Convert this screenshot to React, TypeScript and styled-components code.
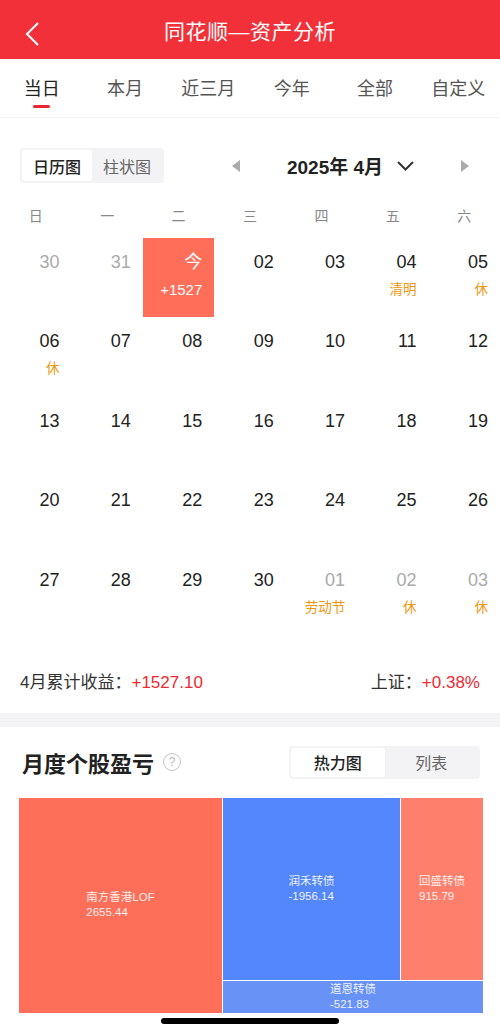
import React from "react";
import styled, { createGlobalStyle } from "styled-components";

const GlobalStyle = createGlobalStyle`
	* {
		box-sizing: border-box;
	}
	html,
	body {
		margin: 0;
		padding: 0;
		width: 500px;
		height: 1034px;
		overflow: hidden;
		background: #fff;
		font-family: "Liberation Sans", "Noto Sans CJK SC", sans-serif;
		color: #222;
	}
`;

const Page = styled.div`
	width: 500px;
	height: 1034px;
	display: flex;
	flex-direction: column;
`;

const Header = styled.header`
	height: 59px;
	background: #f1303a;
	display: flex;
	align-items: center;
	justify-content: center;
	position: relative;
	color: #fff;
	font-size: 21px;
	letter-spacing: 0.5px;
`;

const BackButton = styled.div`
	position: absolute;
	left: 24px;
	top: 21px;
	width: 18px;
	height: 26px;
	display: flex;
`;

const Tabs = styled.nav`
	height: 59px;
	display: grid;
	grid-template-columns: repeat(6, 1fr);
	border-bottom: 1px solid #f2f2f2;
`;

interface ActiveProps {
	active?: boolean;
}

const Tab = styled.div<ActiveProps>`
	position: relative;
	display: flex;
	align-items: center;
	justify-content: center;
	font-size: 18px;
	color: ${(p) => (p.active ? "#222" : "#555")};
	padding-bottom: 2px;

	&::after {
		content: "";
		display: ${(p) => (p.active ? "block" : "none")};
		position: absolute;
		left: 50%;
		bottom: 9px;
		width: 17px;
		height: 3px;
		margin-left: -9px;
		border-radius: 2px;
		background: #e8262f;
	}
`;

const Toolbar = styled.div`
	display: flex;
	align-items: center;
	padding: 0 30px 0 20px;
	margin-top: 30px;
	height: 35px;
`;

const Segmented = styled.div<{ width: number }>`
	width: ${(p) => p.width}px;
	height: 100%;
	display: grid;
	grid-template-columns: 1fr 1fr;
	background: #f3f3f5;
	border-radius: 4px;
	padding: 2px;
`;

const Segment = styled.div<ActiveProps>`
	display: flex;
	align-items: center;
	justify-content: center;
	font-size: 16px;
	border-radius: 3px;
	background: ${(p) => (p.active ? "#fff" : "transparent")};
	color: ${(p) => (p.active ? "#222" : "#666")};
	font-weight: ${(p) => (p.active ? 500 : 400)};
`;

const MonthNav = styled.div`
	flex: 1;
	margin-left: 67px;
	display: flex;
	align-items: center;
	justify-content: space-between;
`;

const MonthTitle = styled.div`
	display: flex;
	align-items: center;
	gap: 14px;
	font-size: 19px;
	font-weight: bold;
	color: #222;
`;

const WeekRow = styled.div`
	display: grid;
	grid-template-columns: repeat(7, 1fr);
	margin-top: 23px;
	height: 20px;
`;

const WeekDay = styled.div`
	text-align: center;
	font-size: 14px;
	line-height: 20px;
	color: #888;
`;

const Grid = styled.div`
	display: grid;
	grid-template-columns: repeat(7, 1fr);
	grid-auto-rows: 79.4px;
	margin-top: 12px;
`;

const Cell = styled.div<{ today?: boolean }>`
	display: flex;
	flex-direction: column;
	align-items: flex-end;
	padding: 13px 12px 0 0;
	background: ${(p) => (p.today ? "#fe6e59" : "transparent")};
`;

const DayNum = styled.div<{ muted?: boolean; today?: boolean }>`
	font-size: 18px;
	line-height: 22px;
	color: ${(p) => (p.today ? "#fff" : p.muted ? "#aaa" : "#222")};
`;

const DayNote = styled.div<{ today?: boolean }>`
	margin-top: 8px;
	font-size: ${(p) => (p.today ? "15px" : "13.5px")};
	line-height: 18px;
	color: ${(p) => (p.today ? "#fff" : "#ef960f")};
	font-weight: ${(p) => (p.today ? 500 : 400)};
`;

const Summary = styled.div`
	display: flex;
	justify-content: space-between;
	padding: 37px 20px 19px 20px;
	font-size: 17px;
	line-height: 22px;
	color: #333;
`;

const Red = styled.span`
	color: #ed2a33;
`;

const Band = styled.div`
	height: 14px;
	background: #f4f4f6;
`;

const SectionHead = styled.div`
	display: flex;
	align-items: center;
	justify-content: space-between;
	padding: 19px 20px 0 22px;
	height: 52px;
`;

const SectionTitle = styled.h2`
	margin: 0;
	display: flex;
	align-items: center;
	gap: 9px;
	font-size: 22px;
	font-weight: bold;
	color: #222;
`;

const HelpIcon = styled.span`
	width: 18px;
	height: 18px;
	border: 1.5px solid #c4c4c4;
	border-radius: 50%;
	color: #b8b8b8;
	font-size: 12px;
	font-weight: normal;
	display: flex;
	align-items: center;
	justify-content: center;
`;

const Treemap = styled.div`
	margin: 19px 17px 0 19px;
	height: 215px;
	display: grid;
	grid-template-columns: 203px 177px 82px;
	grid-template-rows: 182px 32px;
	gap: 1px;
	background: #fff;
`;

interface TileProps {
	color: string;
	col: string;
	row: string;
}

const Tile = styled.div<TileProps>`
	grid-column: ${(p) => p.col};
	grid-row: ${(p) => p.row};
	background: ${(p) => p.color};
	display: flex;
	align-items: center;
	justify-content: center;
	overflow: hidden;
	color: rgba(255, 255, 255, 0.92);
	font-size: 11.5px;
	line-height: 15px;
`;

const HomeBar = styled.div`
	position: fixed;
	left: 161px;
	bottom: 10px;
	width: 178px;
	height: 6px;
	border-radius: 3px;
	background: #000;
`;

interface Day {
	n: string;
	muted?: boolean;
	note?: string;
	today?: boolean;
}

const days: Day[] = [
	{ n: "30", muted: true },
	{ n: "31", muted: true },
	{ n: "今", today: true, note: "+1527" },
	{ n: "02" },
	{ n: "03" },
	{ n: "04", note: "清明" },
	{ n: "05", note: "休" },
	{ n: "06", note: "休" },
	...["07", "08", "09", "10", "11", "12"].map((n) => ({ n })),
	...["13", "14", "15", "16", "17", "18", "19"].map((n) => ({ n })),
	...["20", "21", "22", "23", "24", "25", "26"].map((n) => ({ n })),
	{ n: "27" },
	{ n: "28" },
	{ n: "29" },
	{ n: "30" },
	{ n: "01", muted: true, note: "劳动节" },
	{ n: "02", muted: true, note: "休" },
	{ n: "03", muted: true, note: "休" },
];

const tabs = ["当日", "本月", "近三月", "今年", "全部", "自定义"];
const weekDays = ["日", "一", "二", "三", "四", "五", "六"];

const tiles = [
	{ name: "南方香港LOF", value: "2655.44", color: "#fe6f5a", col: "1", row: "1 / span 2" },
	{ name: "润禾转债", value: "-1956.14", color: "#5487fb", col: "2", row: "1" },
	{ name: "回盛转债", value: "915.79", color: "#fe7f6b", col: "3", row: "1" },
	{ name: "道恩转债", value: "-521.83", color: "#6892f6", col: "2 / span 2", row: "2" },
];

const Triangle = ({ dir }: { dir: "left" | "right" }) => (
	<svg width="9" height="12" viewBox="0 0 9 12">
		<polygon points={dir === "left" ? "9,0 9,12 1,6" : "0,0 0,12 8,6"} fill="#aaa" />
	</svg>
);

const App = () => {
	return (
		<Page>
			<GlobalStyle />
			<Header>
				<BackButton>
					<svg width="18" height="26" viewBox="0 0 18 26">
						<polyline points="14,2 3,13 14,24" fill="none" stroke="#fff" strokeWidth="2" />
					</svg>
				</BackButton>
				同花顺—资产分析
			</Header>
			<Tabs>
				{tabs.map((t, i) => (
					<Tab key={t} active={i === 0}>
						{t}
					</Tab>
				))}
			</Tabs>

			<Toolbar>
				<Segmented width={144}>
					<Segment active>日历图</Segment>
					<Segment>柱状图</Segment>
				</Segmented>
				<MonthNav>
					<Triangle dir="left" />
					<MonthTitle>
						2025年 4月
						<svg width="17" height="10" viewBox="0 0 17 10">
							<polyline points="1,1 8.5,8.5 16,1" fill="none" stroke="#333" strokeWidth="2" />
						</svg>
					</MonthTitle>
					<Triangle dir="right" />
				</MonthNav>
			</Toolbar>

			<WeekRow>
				{weekDays.map((d) => (
					<WeekDay key={d}>{d}</WeekDay>
				))}
			</WeekRow>
			<Grid>
				{days.map((d, i) => (
					<Cell key={i} today={d.today}>
						<DayNum muted={d.muted} today={d.today}>
							{d.n}
						</DayNum>
						{d.note && <DayNote today={d.today}>{d.note}</DayNote>}
					</Cell>
				))}
			</Grid>

			<Summary>
				<span>
					4月累计收益：<Red>+1527.10</Red>
				</span>
				<span>
					上证：<Red>+0.38%</Red>
				</span>
			</Summary>
			<Band />

			<SectionHead>
				<SectionTitle>
					月度个股盈亏
					<HelpIcon>?</HelpIcon>
				</SectionTitle>
				<Segmented width={191}>
					<Segment active>热力图</Segment>
					<Segment>列表</Segment>
				</Segmented>
			</SectionHead>
			<Treemap>
				{tiles.map((t) => (
					<Tile key={t.name} color={t.color} col={t.col} row={t.row}>
						<div>
							<div>{t.name}</div>
							<div>{t.value}</div>
						</div>
					</Tile>
				))}
			</Treemap>
			<HomeBar />
		</Page>
	);
};

export default App;
